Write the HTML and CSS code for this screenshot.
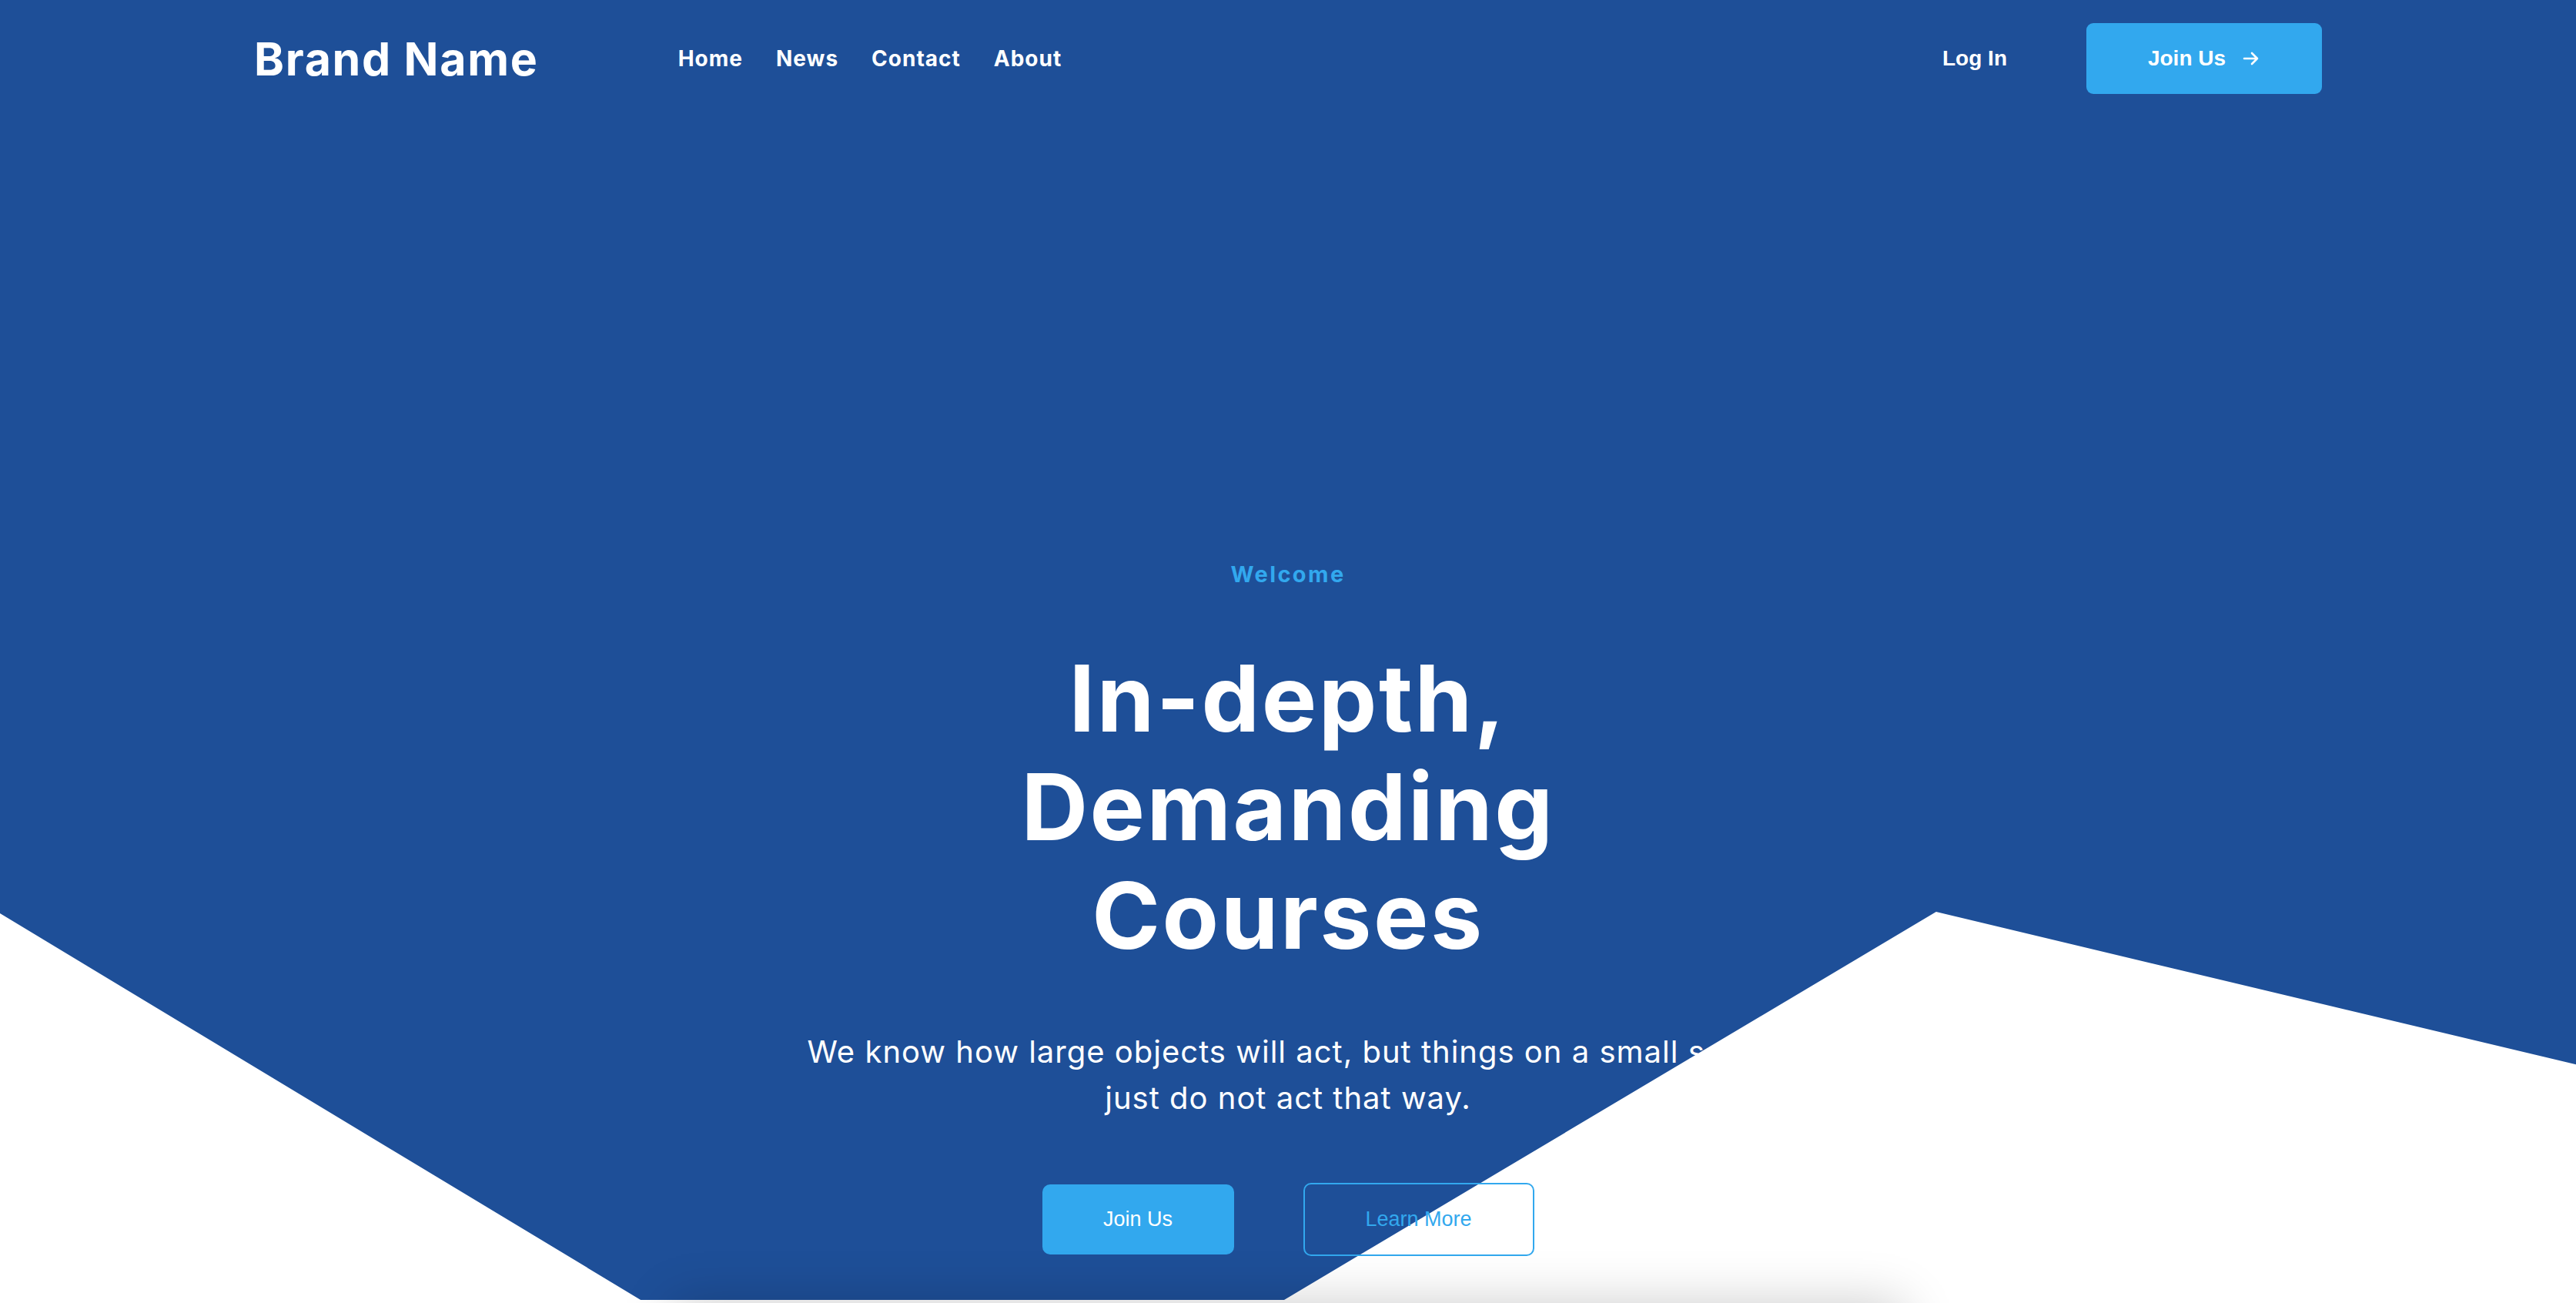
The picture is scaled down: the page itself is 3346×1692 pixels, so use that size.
FILE: index.html
```html
<!DOCTYPE html>
<html lang="en">
<head>
<meta charset="utf-8">
<title>Brand Name</title>
<link rel="stylesheet" href="styles.css">
</head>
<body>
<div class="hero">
  <header class="topbar">
    <a class="brand" href="#">Brand Name</a>
    <nav class="nav">
      <a href="#">Home</a>
      <a href="#">News</a>
      <a href="#">Contact</a>
      <a href="#">About</a>
    </nav>
    <div class="actions">
      <a class="login" href="#">Log In</a>
      <a class="btn-join" href="#">Join Us
        <svg class="arrow" viewBox="0 0 24 24" width="24" height="24" aria-hidden="true"><path d="M3 12h17M13 5l7 7-7 7" fill="none" stroke="#fff" stroke-width="2.6" stroke-linecap="round" stroke-linejoin="round"/></svg>
      </a>
    </div>
  </header>
  <section class="intro">
    <p class="eyebrow">Welcome</p>
    <h1 class="title">In-depth,<br>Demanding<br>Courses</h1>
    <p class="lead">We know how large objects will act, but things on a small scale just do not act that way.</p>
    <div class="cta">
      <a class="btn btn-primary" href="#">Join Us</a>
      <a class="btn btn-outline" href="#">Learn More</a>
    </div>
  </section>
</div>
<section class="features">
  <div class="card"></div>
</section>
</body>
</html>
```
FILE: styles.css
```css
* { box-sizing: border-box; }
html, body { margin: 0; padding: 0; }
body {
  font-family: Inter, "Open Sans", sans-serif;
  background: #ffffff;
  color: #ffffff;
}
a { text-decoration: none; color: inherit; }

.hero {
  position: relative;
  z-index: 0;
  height: 1692px;
  overflow: hidden;
  background: #ffffff;
}
.hero::before {
  content: "";
  position: absolute;
  inset: 0;
  z-index: -1;
  background: #1e4f98;
  clip-path: polygon(0 0, 100% 0, 100% 81.7%, 75.16% 69.98%, 49.85% 99.76%, 24.87% 99.76%, 0 70.1%);
}

.topbar {
  display: flex;
  align-items: center;
  width: 2686px;
  height: 152px;
  margin: 0 auto;
}
.brand {
  font-weight: 700;
  font-size: 59px;
  line-height: 1;
  color: #fff;
  letter-spacing: 1.7px;
}
.nav {
  display: flex;
  gap: 43px;
  margin-left: 181px;
}
.nav a {
  font-weight: 700;
  font-size: 28px;
  letter-spacing: 1px;
  color: #fff;
}
.actions {
  margin-left: auto;
  display: flex;
  align-items: center;
  gap: 103px;
}
.login {
  font-family: "Liberation Sans", Arial, sans-serif;
  font-weight: 700;
  font-size: 28px;
  color: #fff;
}
.btn-join {
  display: flex;
  align-items: center;
  justify-content: center;
  gap: 21px;
  width: 306px;
  height: 92px;
  border-radius: 9px;
  background: #32a8ee;
  font-family: "Liberation Sans", Arial, sans-serif;
  font-weight: 700;
  font-size: 28px;
  color: #fff;
}
.arrow { display: block; }

.intro {
  display: flex;
  flex-direction: column;
  align-items: center;
  text-align: center;
  padding-top: 574px;
}
.eyebrow {
  margin: 0;
  font-weight: 700;
  font-size: 29px;
  line-height: 40px;
  letter-spacing: 2.4px;
  color: #32a8ee;
}
.title {
  margin: 70px 0 0;
  font-weight: 700;
  font-size: 120px;
  line-height: 141px;
  letter-spacing: 2.5px;
  color: #fff;
}
.lead {
  margin: 77px 0 0;
  max-width: 1270px;
  font-weight: 400;
  font-size: 40px;
  line-height: 60px;
  letter-spacing: 1px;
  color: #fff;
}
.cta {
  display: flex;
  align-items: center;
  gap: 90px;
  margin-top: 80px;
}
.btn {
  display: flex;
  align-items: center;
  justify-content: center;
  font-family: "Liberation Sans", Arial, sans-serif;
  font-size: 27px;
  border-radius: 10px;
}
.btn-primary {
  width: 249px;
  height: 91px;
  background: #32a8ee;
  color: #fff;
}
.btn-outline {
  width: 300px;
  height: 95px;
  border: 2px solid #32a8ee;
  color: #32a8ee;
  background: transparent;
}

.features {
  display: flex;
  justify-content: center;
}
.card {
  position: relative;
  z-index: 1;
  width: 1600px;
  height: 400px;
  background: #fff;
  box-shadow: 0 0 64px rgba(0, 0, 0, 0.2);
}
```
